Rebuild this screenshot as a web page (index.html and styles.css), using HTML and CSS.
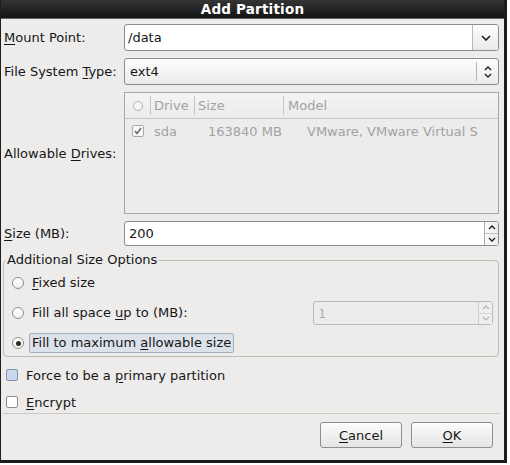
FILE: index.html
```html
<!DOCTYPE html>
<html>
<head>
<meta charset="utf-8">
<link rel="stylesheet" href="styles.css">
</head>
<body>
<div class="window">
  <div class="titlebar">Add Partition</div>
  <div class="form">
    <div class="lbl"><u>M</u>ount Point:</div>
    <div class="combo-entry">
      <div class="ce-text">/data</div>
      <div class="ce-btn">
        <svg width="10" height="6" viewBox="0 0 10 6"><path d="M1 1 L5 5 L9 1" fill="none" stroke="#1a1a1a" stroke-width="1.6"/></svg>
      </div>
    </div>

    <div class="lbl">File System <u>T</u>ype:</div>
    <div class="combo">
      <div class="combo-text">ext4</div>
      <div class="combo-sep"></div>
      <div class="combo-arrows">
        <svg width="8" height="14" viewBox="0 0 8 14"><path d="M1 5 L4 2 L7 5" fill="none" stroke="#1a1a1a" stroke-width="1.3"/><path d="M1 9 L4 12 L7 9" fill="none" stroke="#1a1a1a" stroke-width="1.3"/></svg>
      </div>
    </div>

    <div class="lbl">Allowable <u>D</u>rives:</div>
    <div class="tree">
      <div class="tree-head">
        <div class="th th-check"><span class="hcircle"></span></div>
        <div class="th-sep"></div>
        <div class="th th-drive">Drive</div>
        <div class="th-sep"></div>
        <div class="th th-size">Size</div>
        <div class="th-sep"></div>
        <div class="th th-model">Model</div>
      </div>
      <div class="tree-row">
        <div class="td td-check">
          <span class="tcheck"><svg width="10" height="10" viewBox="0 0 10 10"><path d="M2 5 L4 7.5 L8 2" fill="none" stroke="#6a6a6a" stroke-width="1.6"/></svg></span>
        </div>
        <div class="td td-drive">sda</div>
        <div class="td td-size">163840 MB</div>
        <div class="td td-model">VMware, VMware Virtual S</div>
      </div>
    </div>

    <div class="lbl"><u>S</u>ize (MB):</div>
    <div class="spin">
      <div class="spin-text">200</div>
      <div class="spin-btns">
        <div class="sb"><svg width="8" height="5" viewBox="0 0 8 5"><path d="M1 4 L4 1 L7 4" fill="none" stroke="#1a1a1a" stroke-width="1.3"/></svg></div>
        <div class="sb"><svg width="8" height="5" viewBox="0 0 8 5"><path d="M1 1 L4 4 L7 1" fill="none" stroke="#1a1a1a" stroke-width="1.3"/></svg></div>
      </div>
    </div>
  </div>

  <fieldset class="frame">
    <legend class="frame-title">Additional Size Options</legend>
    <div class="opts">
      <div class="opt">
        <span class="radio"></span>
        <span class="opt-label"><u>F</u>ixed size</span>
      </div>
      <div class="opt">
        <span class="radio"></span>
        <span class="opt-label">Fill all space <u>u</u>p to (MB):</span>
        <div class="spin spin-off">
          <div class="spin-text">1</div>
          <div class="spin-btns">
            <div class="sb"><svg width="8" height="5" viewBox="0 0 8 5"><path d="M1 4 L4 1 L7 4" fill="none" stroke="#b4b4b4" stroke-width="1.2"/></svg></div>
            <div class="sb"><svg width="8" height="5" viewBox="0 0 8 5"><path d="M1 1 L4 4 L7 1" fill="none" stroke="#b4b4b4" stroke-width="1.2"/></svg></div>
          </div>
        </div>
      </div>
      <div class="opt">
        <span class="radio on"><span class="dot"></span></span>
        <span class="opt-label focus">Fill to maximum <u>a</u>llowable size</span>
      </div>
    </div>
  </fieldset>

  <div class="checks">
    <div class="chk-row">
      <span class="chk hover"></span>
      <span>Force to be a <u>p</u>rimary partition</span>
    </div>
    <div class="chk-row">
      <span class="chk"></span>
      <span><u>E</u>ncrypt</span>
    </div>
  </div>

  <div class="separator"></div>

  <div class="buttons">
    <div class="btn"><u>C</u>ancel</div>
    <div class="btn"><u>O</u>K</div>
  </div>
</div>
</body>
</html>
```

FILE: styles.css
```css
* { box-sizing: border-box; }
html, body { margin: 0; padding: 0; }
body {
  background: #ffffff;
  font-family: "DejaVu Sans", "Liberation Sans", sans-serif;
  font-size: 13px;
  color: #161616;
  width: 510px;
  height: 465px;
  overflow: hidden;
}
u { text-decoration: underline; text-underline-offset: 2px; }

.window {
  width: 507px;
  height: 463px;
  background: #edeceb;
  border-left: 1px solid #1f1f1f;
  border-right: 3px solid #1b1b1b;
  border-bottom: 3px solid #1b1b1b;
  display: flex;
  flex-direction: column;
}

.titlebar {
  height: 19px;
  line-height: 18px;
  background: linear-gradient(#353535, #141414);
  border-bottom: 1px solid #5d6670;
  color: #fff;
  font-weight: bold;
  font-size: 13.5px;
  text-align: center;
  letter-spacing: 0.2px;
}

.form {
  margin-top: 5px;
  padding: 0 5px 0 3px;
  display: grid;
  grid-template-columns: 120px 1fr;
  grid-template-rows: 27px 27px 122px 25px;
  row-gap: 7px;
  align-items: center;
}
.lbl { white-space: nowrap; }

.combo-entry {
  height: 27px;
  display: flex;
  border: 1px solid #8c8c8c;
  border-radius: 3px;
  background: #fff;
  overflow: hidden;
}
.ce-text { flex: 1; padding-left: 3px; line-height: 25px; }
.ce-btn {
  width: 26px;
  border-left: 1px solid #b9b9b9;
  background: linear-gradient(#fdfdfd, #e9e9e9);
  display: flex;
  align-items: center;
  justify-content: center;
}

.combo {
  height: 27px;
  display: flex;
  align-items: center;
  border: 1px solid #8c8c8c;
  border-radius: 3px;
  background: linear-gradient(#fdfdfd, #ebebeb);
}
.combo-text { flex: 1; padding-left: 5px; }
.combo-sep { width: 1px; height: 19px; background: #b5b5b5; }
.combo-arrows {
  width: 21px;
  display: flex;
  align-items: center;
  justify-content: center;
}

.tree {
  height: 122px;
  border: 1px solid #a7a7a7;
  background: #edecec;
  color: #a2a2a2;
}
.tree-head {
  height: 26px;
  display: flex;
  align-items: center;
  border-bottom: 1px solid #c4c4c4;
  background: linear-gradient(#f4f4f4, #ebebeb);
}
.th { white-space: nowrap; }
.th-check { width: 25px; display: flex; justify-content: center; }
.hcircle {
  width: 10px; height: 10px;
  border: 1px solid #b3b3b3;
  border-radius: 50%;
  background: #f6f6f6;
}
.th-sep { width: 1px; height: 19px; background: #c6c6c6; }
.th-drive { width: 43px; padding-left: 3px; }
.th-size { width: 88px; padding-left: 3px; }
.th-model { flex: 1; padding-left: 4px; }

.tree-row {
  height: 22px;
  margin-top: 1px;
  display: grid;
  grid-template-columns: 25px 44px 89px 1fr;
  align-items: center;
}
.td { white-space: nowrap; overflow: hidden; }
.td-check { display: flex; justify-content: center; }
.tcheck {
  width: 12px; height: 12px;
  border: 1px solid #a9a9a9;
  border-radius: 2px;
  background: #f7f7f7;
  display: flex;
  align-items: center;
  justify-content: center;
}
.td-drive { padding-left: 4px; }
.td-size { padding-left: 14px; }
.td-model { padding-left: 24px; }

.spin {
  height: 25px;
  display: flex;
  border: 1px solid #8c8c8c;
  border-radius: 3px;
  background: #fff;
}
.spin-text { flex: 1; padding-left: 4px; line-height: 23px; }
.spin-btns {
  width: 14px;
  display: flex;
  flex-direction: column;
  border-left: 1px solid #a8a8a8;
  background: linear-gradient(90deg, #fafafa, #ececec);
}
.sb {
  flex: 1;
  display: flex;
  align-items: center;
  justify-content: center;
}
.sb + .sb { border-top: 1px solid #c2c2c2; }

.spin-off {
  width: 180px;
  height: 24px;
  margin-left: auto;
  border-color: #b9b9b9;
  background: #edecec;
  color: #b0b0b0;
}
.spin-off .spin-btns { border-left-color: #cccccc; background: #efefef; }
.spin-off .sb + .sb { border-top-color: #d4d4d4; }

.frame {
  margin: 6px 5px 0 2px;
  padding: 0;
  border: 1px solid #bebcb8;
  border-radius: 4px;
  min-width: 0;
}
.frame-title {
  padding: 0 1px;
  margin-left: 2px;
  line-height: 16px;
}
.opts {
  padding: 3px 5px 1px 8px;
  display: flex;
  flex-direction: column;
  gap: 6px;
}
.opt {
  height: 24px;
  display: flex;
  align-items: center;
}
.radio {
  width: 12px; height: 12px;
  border: 1px solid #8e8e8e;
  border-radius: 50%;
  background: linear-gradient(#ffffff, #f0f0f0);
  display: flex;
  align-items: center;
  justify-content: center;
  flex: none;
}
.dot { width: 5px; height: 5px; border-radius: 50%; background: #2a2a2a; }
.opt-label {
  margin-left: 5px;
  padding: 0 2px;
  border: 1px solid transparent;
  line-height: 18px;
  white-space: nowrap;
}
.opt-label.focus {
  background: #dbe2ea;
  border-color: #a3adba;
  border-radius: 2px;
}

.checks {
  margin-top: 8px;
  padding-left: 5px;
  display: flex;
  flex-direction: column;
  gap: 7px;
}
.chk-row {
  height: 20px;
  display: flex;
  align-items: center;
  gap: 8px;
}
.chk {
  width: 12px; height: 12px;
  border: 1px solid #8e8e8e;
  border-radius: 2px;
  background: #fff;
  flex: none;
}
.chk.hover { background: #c9d8ec; border-color: #7f93ad; }

.separator {
  margin: 1px 4px 0 2px;
  height: 1px;
  background: #c9c7c3;
}

.buttons {
  margin-top: 8px;
  padding-right: 11px;
  display: flex;
  justify-content: flex-end;
  gap: 9px;
}
.btn {
  width: 82px;
  height: 26px;
  border: 1px solid #8f8f8f;
  border-radius: 3px;
  background: linear-gradient(#fcfcfc, #e4e4e4);
  display: flex;
  align-items: center;
  justify-content: center;
}
```
